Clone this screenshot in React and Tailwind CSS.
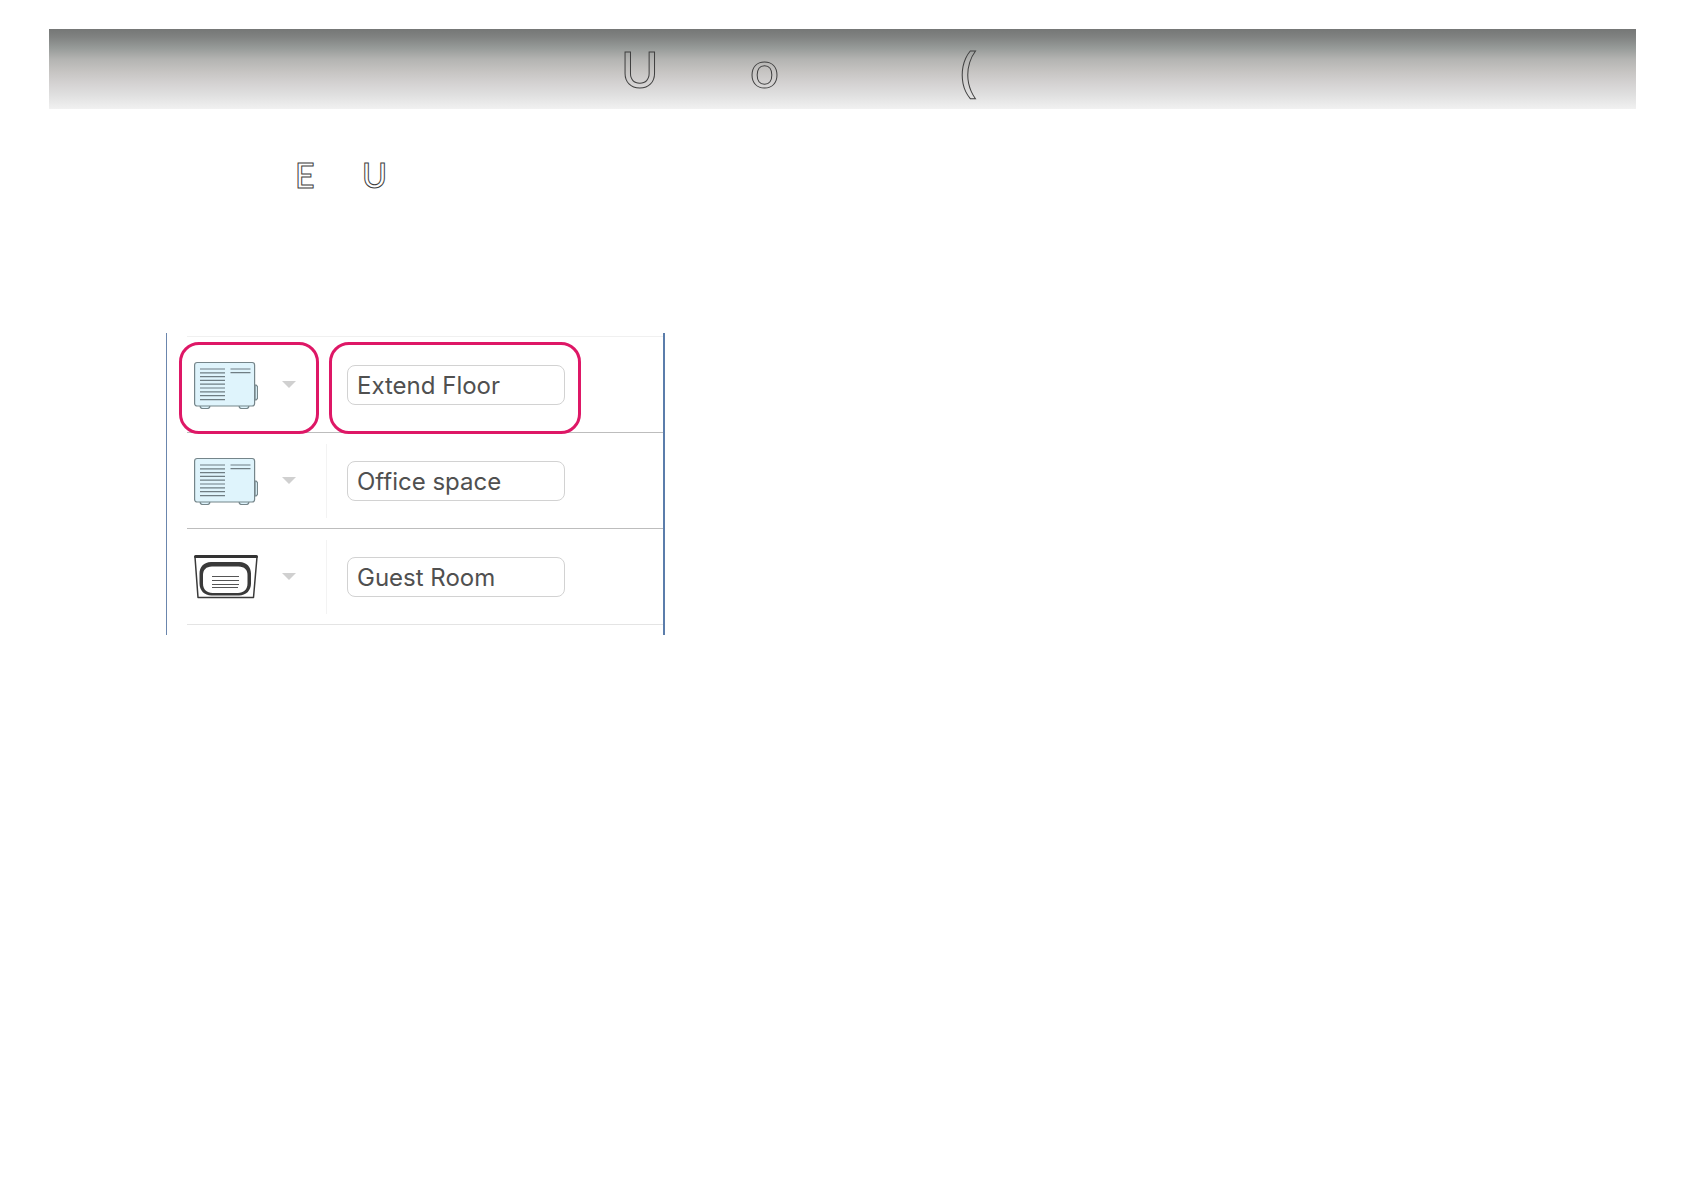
import React from "react";

function OutdoorUnitIcon() {
  return (
    <svg viewBox="0 0 64 48" className="h-12 w-16" fill="none" aria-hidden="true">
      <g stroke="#75858a" strokeWidth="1.200">
        <path d="M61 24h1.200l1.300 1.500v12l-1.300 1.500H61z" fill="#dff4fc" />
        <path d="M6 44.500c0 2 1 3 2.500 3h5c1.500 0 2.500-1 2.500-3zM45 44.500c0 2 1 3 2.500 3h5c1.500 0 2.500-1 2.500-3z" fill="#dff4fc" />
        <rect x=".6" y="1.500" width="60" height="43.500" rx="2.500" fill="#dff4fc" />
      </g>
      <g stroke="#6f7d83" strokeWidth="1.200">
        <path d="M6 8h25M6 11.800h25M6 15.600h25M6 19.400h25M6 23.200h25M6 27h25M6 30.800h25M6 34.600h25M6 38.700h25" />
        <path d="M36.500 8h20M36.500 11.700h20" />
      </g>
    </svg>
  );
}

function CassetteUnitIcon() {
  return (
    <svg viewBox="0 0 64 48" className="h-12 w-16" fill="none" aria-hidden="true">
      <path d="M1 4l3 40.500h55.500L63 4z" stroke="#3a3a3a" strokeWidth="1.500" strokeLinejoin="round" />
      <path d="M1.500 3.500h61" stroke="#333" strokeWidth="3" strokeLinecap="round" />
      <path
        fillRule="evenodd"
        fill="#3a3a3a"
        d="M17 9h28.500c7 0 11.500 5 11.500 11.500v10c0 7-5 12-12 12H17.500C10.500 42.500 5.500 37.500 5.500 30.500v-10C5.500 14 10 9 17 9zM18 13.500c-6 0-9 3.500-9 8.500v8.500c0 6 4 9.500 9.500 9.500h25.500c5.500 0 9.500-3.500 9.500-9.500V22c0-5-3-8.500-9-8.500z"
      />
      <path d="M18 23.500h27M18 27.500h27M18 31.500h27M18 34.500h26" stroke="#555" strokeWidth="1" />
    </svg>
  );
}

const rooms = [
  { name: "Extend Floor", Icon: OutdoorUnitIcon, highlighted: true },
  { name: "Office space", Icon: OutdoorUnitIcon },
  { name: "Guest Room", Icon: CassetteUnitIcon, last: true },
];

function RoomRow({ name, Icon, highlighted, last }) {
  return (
    <li className={`relative flex h-24 items-center border-b ${last ? "border-[#e4e4e4]" : "border-[#bdbdbd]"}`}>
      <button type="button" aria-label={`Icon for ${name}`} className="flex h-20 w-[139px] shrink-0 items-center gap-6 pl-[7px]">
        <Icon />
        <svg viewBox="0 0 14 7" className="h-[7px] w-3.5" aria-hidden="true">
          <path d="M0 0h14L7 7z" fill="#d0d0d0" />
        </svg>
      </button>
      <div className={`flex h-[74px] items-center border-l pl-5 ${highlighted ? "border-transparent" : "border-[#f3f3f3]"}`}>
        <input
          type="text"
          aria-label="Name"
          defaultValue={name}
          className="h-10 w-[218px] rounded-lg border border-[#d2d2d2] bg-white px-[9px] pt-0.5 font-['Inter',sans-serif] text-2xl text-[#505050] outline-none"
        />
      </div>
      {highlighted && (
        <>
          <span className="pointer-events-none absolute top-[5px] -left-2 h-[92px] w-[140px] rounded-[20px] border-3 border-[#de1766]" />
          <span className="pointer-events-none absolute top-[5px] left-[142px] h-[92px] w-[252px] rounded-[20px] border-3 border-[#de1766]" />
        </>
      )}
    </li>
  );
}

export default function App() {
  return (
    <div className="min-h-screen bg-white px-12 pt-[29px] font-['Lato',sans-serif] antialiased">
      <header className="ml-px bg-[linear-gradient(to_bottom,#757776_0%,#808281_10%,#979b99_24%,#b4b4b2_38%,#c6c4c2_53%,#d4d2d2_68%,#e0e0e0_83%,#f1f1f1_100%)]">
        <h1 className="flex h-20 items-center pb-0.5 pl-[572px] text-[51px] leading-none font-medium text-transparent [-webkit-text-stroke:1px_#3f3f3f]">
          <span className="w-[129px]">U</span>
          <span className="w-[210px]">o</span>
          <span className="font-['Noto_Sans',sans-serif] text-[55px]">(</span>
        </h1>
      </header>
      <main className="pt-12">
        <h2 className="flex h-9 items-center pl-[247px] text-[34px] leading-none font-medium text-transparent [-webkit-text-stroke:1px_#3f3f3f]">
          <span className="w-[67px]">E</span>
          <span>U</span>
        </h2>
        <section aria-label="Room settings" className="mt-[140px] ml-[118px] w-[499px] border-r-2 border-l border-r-[#5b7dab] border-l-[#6b86ad] pt-[3px] pb-2.5">
          <ul className="ml-5 border-t border-[#f0f0f0]">
            {rooms.map((room) => (
              <RoomRow key={room.name} {...room} />
            ))}
          </ul>
        </section>
      </main>
    </div>
  );
}
